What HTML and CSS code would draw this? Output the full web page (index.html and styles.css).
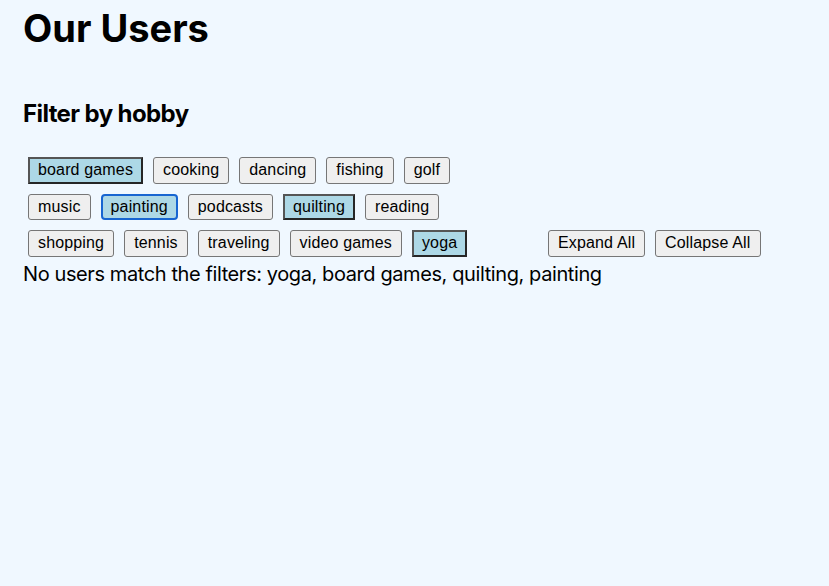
FILE: index.html
```html
<!DOCTYPE html>
<html lang="en">
<head>
<meta charset="utf-8">
<title>Our Users</title>
<link rel="stylesheet" href="styles.css">
</head>
<body>
<main class="page">
  <h1 class="title">Our Users</h1>
  <h2 class="subtitle">Filter by hobby</h2>
  <div class="toolbar">
    <div class="filters">
      <button class="chip selected">board games</button>
      <button class="chip">cooking</button>
      <button class="chip">dancing</button>
      <button class="chip">fishing</button>
      <button class="chip">golf</button>
      <button class="chip">music</button>
      <button class="chip selected focused">painting</button>
      <button class="chip">podcasts</button>
      <button class="chip selected">quilting</button>
      <button class="chip">reading</button>
      <button class="chip">shopping</button>
      <button class="chip">tennis</button>
      <button class="chip">traveling</button>
      <button class="chip">video games</button>
      <button class="chip selected">yoga</button>
    </div>
    <div class="controls">
      <button class="chip">Expand All</button>
      <button class="chip">Collapse All</button>
    </div>
  </div>
  <p class="empty">No users match the filters: yoga, board games, quilting, painting</p>
</main>
</body>
</html>
```
FILE: styles.css
```css
html, body {
  margin: 0;
  padding: 0;
  background: #f0f8ff;
}
.page {
  padding: 5px 23px;
  font-family: Inter, "Liberation Sans", sans-serif;
  color: #000;
}
.title {
  margin: 0;
  font-size: 38px;
  font-weight: 700;
  line-height: 46px;
}
.subtitle {
  margin: 48px 0 24px;
  font-size: 24px;
  font-weight: 700;
  line-height: 29px;
  letter-spacing: -0.6px;
}
.toolbar {
  display: flex;
  align-items: flex-end;
  gap: 50px;
}
.filters {
  width: 470px;
  display: flex;
  flex-wrap: wrap;
}
.controls {
  display: flex;
}
.chip {
  appearance: none;
  margin: 5px;
  font-family: "Liberation Sans", Arial, sans-serif;
  font-size: 16px;
  line-height: 18.5px;
  letter-spacing: 0.15px;
  color: #000;
  background: #efefef;
  border: 1px solid #767676;
  border-radius: 3px;
  padding: 3px 9px;
  cursor: default;
}
.chip.selected {
  background: #add8e6;
  border: 2px solid;
  border-color: #555 #262626 #262626 #555;
  border-radius: 0;
  padding: 2px 8px;
}
.chip.focused {
  border: 2px solid #1765d1;
  border-radius: 4px;
}
.empty {
  margin: 0;
  font-size: 20px;
  line-height: 24px;
  letter-spacing: -0.4px;
}
```
